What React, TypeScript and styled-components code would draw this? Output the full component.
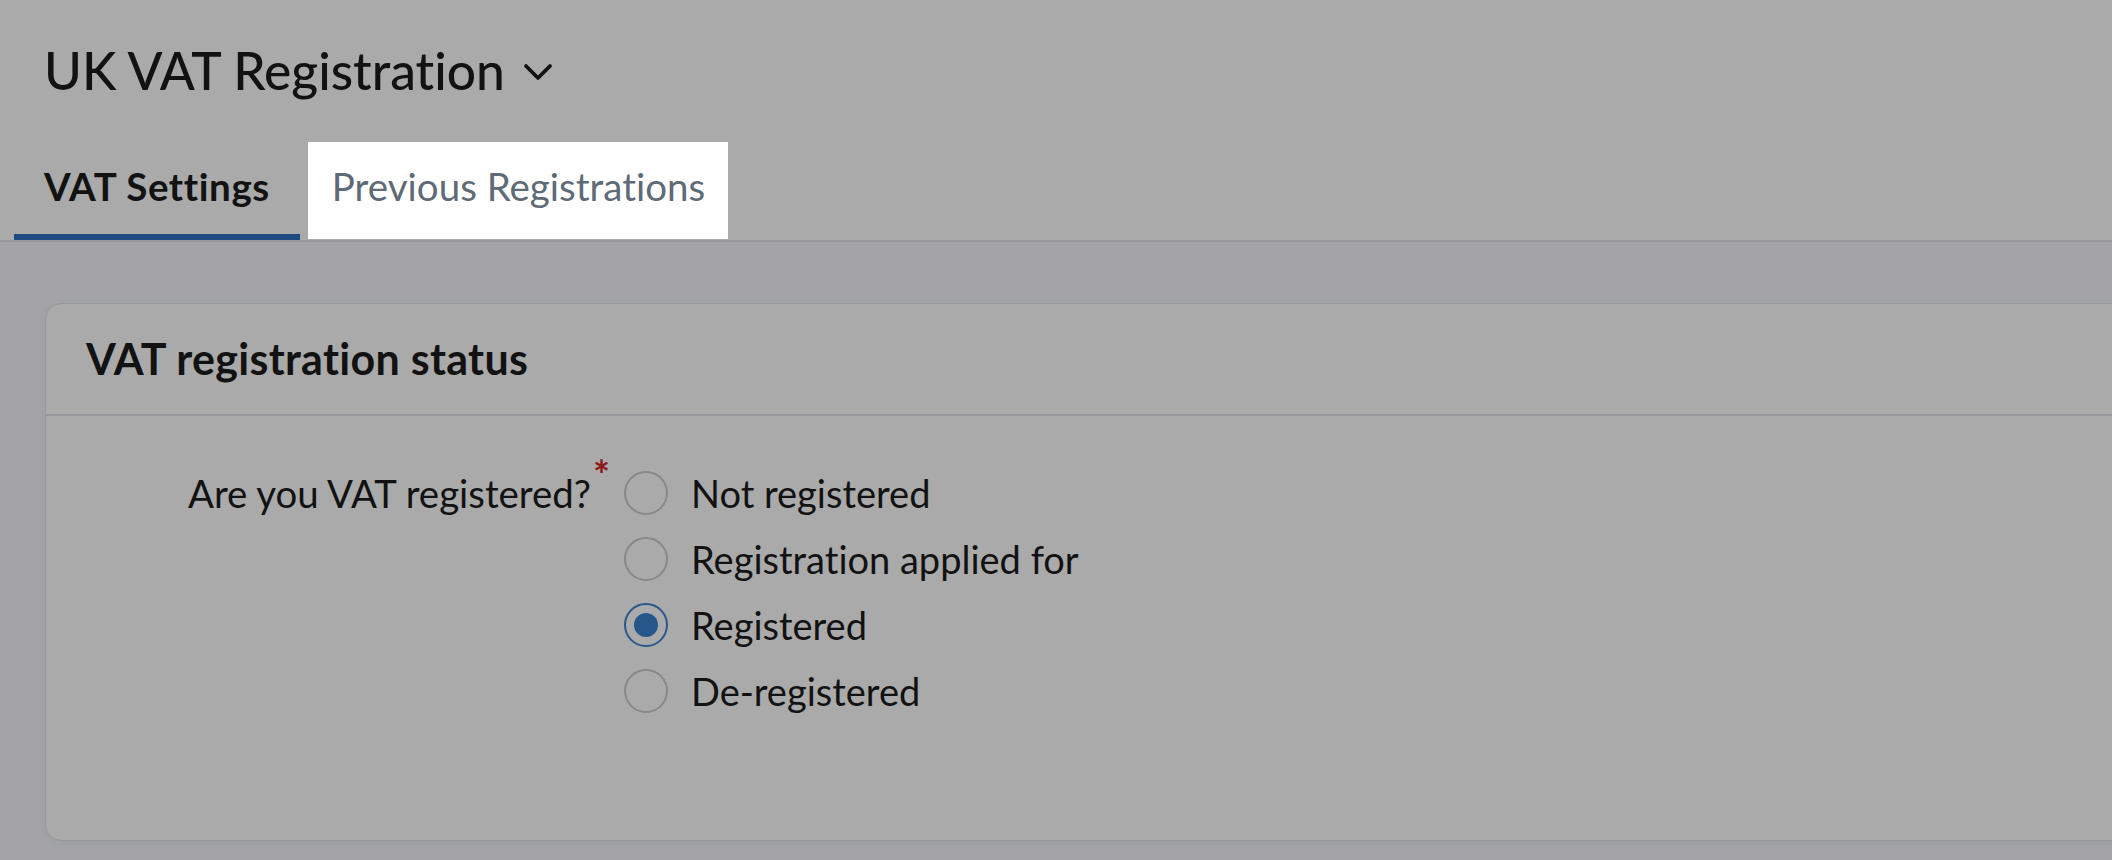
import React, { useState } from 'react';
import styled, { createGlobalStyle, css } from 'styled-components';

const GlobalStyle = createGlobalStyle`
  html, body {
    margin: 0;
    padding: 0;
    background: #ffffff;
    overflow: hidden;
  }

  body {
    font-family: Lato, "Open Sans", Arial, sans-serif;
    font-variant-ligatures: no-common-ligatures;
    color: #1b1b1b;
    -webkit-font-smoothing: antialiased;
  }

  button {
    font: inherit;
    font-variant-ligatures: inherit;
  }

  * {
    box-sizing: border-box;
  }
`;

const statusOptions = [
  { value: 'not-registered', label: 'Not registered' },
  { value: 'applied', label: 'Registration applied for' },
  { value: 'registered', label: 'Registered' },
  { value: 'de-registered', label: 'De-registered' },
];

const App: React.FC = () => {
  const [status, setStatus] = useState('registered');
  const [activeTab, setActiveTab] = useState<'settings' | 'previous'>('settings');

  return (
    <>
      <GlobalStyle />
      <Page>
        <TopBar>
          <TitleRow>
            <Title>UK VAT Registration</Title>
            <ChevronButton aria-label="Switch registration">
              <svg width="30" height="18" viewBox="0 0 30 18" fill="none">
                <path d="M3 3l12 12L27 3" stroke="currentColor" strokeWidth="3.8" strokeLinecap="round" strokeLinejoin="round" />
              </svg>
            </ChevronButton>
          </TitleRow>

          <TabList role="tablist">
            <Tab
              role="tab"
              $active={activeTab === 'settings'}
              onClick={() => setActiveTab('settings')}
            >
              VAT Settings
            </Tab>
            <Tab
              role="tab"
              $active={activeTab === 'previous'}
              $spotlight
              onClick={() => setActiveTab('previous')}
            >
              Previous Registrations
            </Tab>
          </TabList>
        </TopBar>

        <Content>
          <Card>
            <CardHeader>
              <CardTitle>VAT registration status</CardTitle>
            </CardHeader>
            <CardBody>
              <FieldRow>
                <FieldLabel>
                  Are you VAT registered?<Required>*</Required>
                </FieldLabel>
                <RadioGroup role="radiogroup">
                  {statusOptions.map(option => (
                    <RadioOption key={option.value} onClick={() => setStatus(option.value)}>
                      <RadioCircle $checked={status === option.value} />
                      <RadioLabel>{option.label}</RadioLabel>
                    </RadioOption>
                  ))}
                </RadioGroup>
              </FieldRow>
            </CardBody>
          </Card>
        </Content>

        {/* tour backdrop, the spotlighted tab sits above it */}
        <Backdrop />
      </Page>
    </>
  );
};

const Page = styled.div`
  min-height: 100vh;
  display: flex;
  flex-direction: column;
  background: #f6f7fd;
`;

const TopBar = styled.header`
  background: #ffffff;
`;

const TitleRow = styled.div`
  display: flex;
  align-items: center;
  gap: 18px;
  padding: 38px 0 0 44px;
`;

const Title = styled.h1`
  margin: 0;
  font-size: 51.5px;
  line-height: 64px;
  font-weight: 500;
  color: #1b1b1b;
`;

const ChevronButton = styled.button`
  display: flex;
  align-items: center;
  justify-content: center;
  padding: 0;
  border: none;
  background: transparent;
  color: #1b1b1b;
  cursor: pointer;
  margin-top: 4px;
`;

const TabList = styled.nav`
  display: flex;
  gap: 8px;
  margin-top: 40px;
  padding-left: 14px;
  border-bottom: 2px solid #e3e4e9;
`;

interface TabProps {
  $active?: boolean;
  $spotlight?: boolean;
}

const Tab = styled.button<TabProps>`
  display: flex;
  align-items: flex-start;
  height: 98px;
  padding: 22px 30px 0;
  border: none;
  border-bottom: 6px solid transparent;
  background: transparent;
  font-size: 38.5px;
  line-height: 44px;
  font-weight: 400;
  color: #5e6a76;
  cursor: pointer;
  white-space: nowrap;

  ${props => props.$active && css`
    font-weight: 700;
    letter-spacing: 0.6px;
    color: #1b1b1b;
    border-bottom-color: #2f6fc0;
  `}

  ${props => props.$spotlight && css`
    position: relative;
    z-index: 20;
    padding: 22px 23px 0 24px;
    height: 97px;
    border-bottom: none;
    background: #ffffff;
  `}
`;

const Content = styled.main`
  flex: 1;
  padding: 61px 0 18px 45px;
`;

const Card = styled.section`
  margin-right: -60px;
  background: #ffffff;
  border: 1px solid #e3e4e9;
  border-radius: 16px;
  box-shadow: 0 2px 10px rgba(40, 50, 80, 0.06);
`;

const CardHeader = styled.div`
  height: 112px;
  padding: 29px 40px 0;
  border-bottom: 2px solid #e3e4e9;
`;

const CardTitle = styled.h2`
  margin: 0;
  font-size: 43px;
  line-height: 52px;
  font-weight: 700;
  letter-spacing: 0.3px;
  color: #1b1b1b;
`;

const CardBody = styled.div`
  padding: 44px 0 116px;
`;

const FieldRow = styled.div`
  display: grid;
  grid-template-columns: 566px 1fr;
  column-gap: 12px;
  align-items: start;
`;

const FieldLabel = styled.label`
  padding-right: 2px;
  text-align: right;
  font-size: 38.4px;
  line-height: 66px;
  color: #1b1b1b;
`;

const Required = styled.span`
  display: inline-block;
  vertical-align: top;
  margin-left: 2px;
  font-size: 40px;
  line-height: 30px;
  font-weight: 700;
  color: #d12727;
`;

const RadioGroup = styled.div`
  display: flex;
  flex-direction: column;
`;

const RadioOption = styled.div`
  display: flex;
  align-items: center;
  gap: 23px;
  height: 66px;
  cursor: pointer;
`;

const RadioCircle = styled.span<{ $checked: boolean }>`
  flex: 0 0 auto;
  width: 44px;
  height: 44px;
  border-radius: 50%;
  border: 2px solid ${props => (props.$checked ? '#3b83d2' : '#cdcdd1')};
  display: flex;
  align-items: center;
  justify-content: center;

  &::after {
    content: '';
    width: 24px;
    height: 24px;
    border-radius: 50%;
    background: #3a83cf;
    display: ${props => (props.$checked ? 'block' : 'none')};
  }
`;

const RadioLabel = styled.span`
  font-size: 38px;
  line-height: 66px;
  color: #1b1b1b;
`;

const Backdrop = styled.div`
  position: fixed;
  inset: 0;
  z-index: 10;
  background: rgba(0, 0, 0, 0.333);
  pointer-events: none;
`;

export default App;
